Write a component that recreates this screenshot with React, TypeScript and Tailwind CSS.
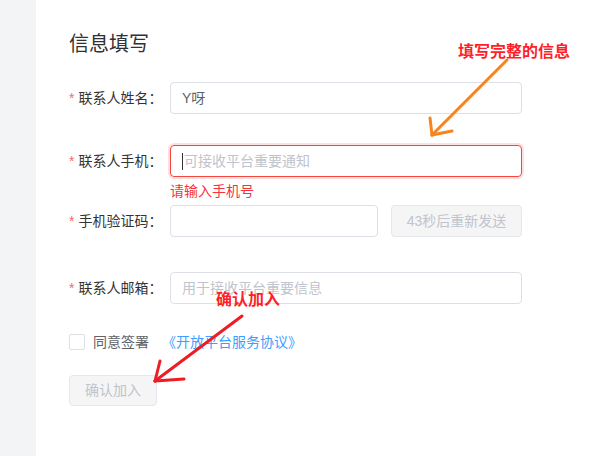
const FONT = { fontFamily: '"Liberation Sans", "Noto Sans CJK SC", sans-serif' };

interface FieldProps {
  label: string;
  children: React.ReactNode;
}

function Field({ label, children }: FieldProps) {
  return (
    <div className="flex items-center">
      <div className="flex w-[101px] shrink-0 items-center text-[14px] text-[#333]">
        <span className="mr-[4px] text-[#f56c6c]">*</span>
        <span>{label}：</span>
      </div>
      {children}
    </div>
  );
}

export default function App() {
  return (
    <div className="relative flex h-[456px] w-[616px] overflow-hidden bg-white" style={FONT}>
      <div className="h-full w-[36px] shrink-0 bg-[#f3f4f6]" />

      <div className="flex-1 pl-[33px] pt-[30px]">
        <h2 className="text-[20px] leading-[28px] font-normal text-[#303133]">信息填写</h2>

        <div className="mt-[24px]">
          <Field label="联系人姓名">
            <div className="flex h-[32px] w-[352px] items-center rounded-[4px] border border-[#dcdfe6] px-[11px] text-[14px] text-[#606266]">
              Y呀
            </div>
          </Field>

          <div className="mt-[31px]">
            <Field label="联系人手机">
              <div className="flex h-[32px] w-[352px] items-center rounded-[4px] border border-[#f5453f] px-[11px] text-[14px] text-[#c0c4cc] shadow-[0_0_0_2px_#ffe0de]">
                <span className="mr-[1px] h-[17px] w-px bg-[#333]" />
                可接收平台重要通知
              </div>
            </Field>
            <div className="ml-[101px] mt-[5px] h-[23px] text-[14px] leading-[18px] text-[#f5333f]">请输入手机号</div>
          </div>

          <Field label="手机验证码">
            <div className="h-[32px] w-[208px] rounded-[4px] border border-[#dcdfe6]" />
            <button className="ml-[13px] flex h-[32px] w-[131px] items-center justify-center rounded-[4px] border border-[#e4e7ed] bg-[#f5f5f5] text-[14px] text-[#c0c4cc]">
              43秒后重新发送
            </button>
          </Field>

          <div className="mt-[35px]">
            <Field label="联系人邮箱">
              <div className="flex h-[32px] w-[352px] items-center rounded-[4px] border border-[#dcdfe6] px-[11px] text-[14px] text-[#c0c4cc]">
                用于接收平台重要信息
              </div>
            </Field>
          </div>

          <div className="mt-[30px] flex h-[16px] items-center text-[14px]">
            <span className="h-[16px] w-[16px] rounded-[2px] border border-[#dcdfe6] bg-white" />
            <span className="ml-[8px] text-[#606266]">同意签署</span>
            <span className="ml-[13px] text-[#409eff]">《开放平台服务协议》</span>
          </div>

          <button className="mt-[25px] flex h-[31px] w-[88px] items-center justify-center rounded-[4px] border border-[#e4e7ed] bg-[#f5f5f5] text-[14px] text-[#c0c4cc]">
            确认加入
          </button>
        </div>
      </div>

      {/* annotations drawn over the screenshot */}
      <div className="absolute left-[458px] top-[42px] text-[16px] leading-[20px] font-bold text-[#ff1f2a]">填写完整的信息</div>
      <div className="absolute left-[216px] top-[290px] text-[16px] leading-[20px] font-bold text-[#ff1f2a]">确认加入</div>
      <svg className="pointer-events-none absolute left-0 top-0" width="616" height="456" fill="none" strokeLinecap="round">
        <g stroke="#f7841f" strokeWidth="3">
          <path d="M507 60 L432 135" />
          <path d="M430 118 L432 135" />
          <path d="M432 135 L452 131" />
        </g>
        <g stroke="#ee1c25" strokeWidth="3">
          <path d="M242 316 L155 381" />
          <path d="M160 361 L155 381" />
          <path d="M155 381 L184 379" />
        </g>
      </svg>
    </div>
  );
}
